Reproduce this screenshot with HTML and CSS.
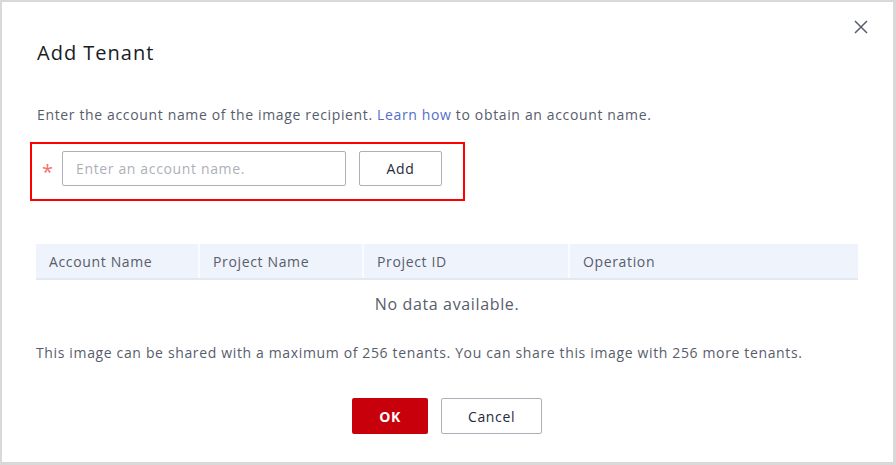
FILE: index.html
```html
<!DOCTYPE html>
<html lang="en">
<head>
<meta charset="utf-8">
<title>Add Tenant</title>
<link rel="stylesheet" href="styles.css">
</head>
<body>
<div class="dialog">
  <div class="dialog-head">
    <h1 class="title">Add Tenant</h1>
    <button class="close" aria-label="Close">
      <svg width="14" height="14" viewBox="0 0 14 14"><path d="M1 1L13 13M13 1L1 13" stroke="#575d6c" stroke-width="1.5" fill="none"/></svg>
    </button>
  </div>
  <p class="desc">Enter the account name of the image recipient. <a class="link" href="#">Learn how</a> to obtain an account name.</p>
  <div class="form-row">
    <span class="req">*</span>
    <input class="input" type="text" placeholder="Enter an account name.">
    <button class="btn btn-add">Add</button>
  </div>
  <div class="table">
    <div class="thead">
      <div class="th c1">Account Name</div>
      <div class="th c2">Project Name</div>
      <div class="th c3">Project ID</div>
      <div class="th c4">Operation</div>
    </div>
    <div class="empty">No data available.</div>
  </div>
  <p class="note">This image can be shared with a maximum of 256 tenants. You can share this image with 256 more tenants.</p>
  <div class="footer">
    <button class="btn btn-ok">OK</button>
    <button class="btn btn-cancel">Cancel</button>
  </div>
</div>
</body>
</html>
```
FILE: styles.css
```css
* { box-sizing: border-box; }
html, body { margin: 0; padding: 0; background: #fff; }
body {
  font-family: "Open Sans", "Noto Sans", sans-serif;
  color: #575d6c;
  font-size: 14px;
  letter-spacing: 0.046em;
}
.dialog {
  width: 896px;
  height: 465px;
  border-style: solid;
  border-color: #d9d9d9;
  border-width: 2px 3px 3px 2px;
  padding: 0 35px 0 34px;
  background: #fff;
}
.dialog-head {
  display: flex;
  justify-content: space-between;
  align-items: flex-start;
  height: 102px;
}
.title {
  margin: 38px 0 0 1px;
  font-size: 20px;
  line-height: 26px;
  font-weight: 500;
  color: #191c24;
  letter-spacing: 0.05em;
}
.close {
  margin: 17px -11px 0 0;
  width: 16px;
  height: 16px;
  padding: 0;
  border: 0;
  background: none;
  display: flex;
  align-items: center;
  justify-content: center;
}
.desc {
  margin: 0 0 0 1px;
  line-height: 22px;
  color: #575d6c;
}
.link { color: #526ecc; text-decoration: none; }
.form-row {
  display: flex;
  align-items: flex-start;
  margin: 16px 0 0 -6px;
  width: 435px;
  height: 59px;
  border: 2px solid #ff0000;
  padding: 7px 0 0 10px;
}
.req {
  color: #f66f6a;
  font-size: 20px;
  width: 20px;
  line-height: 20px;
  padding-top: 11px;
}
.input {
  width: 284px;
  height: 35px;
  border: 1px solid #adb0b8;
  border-radius: 2px;
  padding: 0 13px;
  font-family: inherit;
  font-size: 14px;
  letter-spacing: inherit;
  color: #252b3a;
  outline: none;
}
.input::placeholder { color: #adb0b8; }
.btn {
  height: 36px;
  font-family: inherit;
  font-size: 14px;
  letter-spacing: inherit;
  border-radius: 2px;
  cursor: pointer;
}
.btn-add {
  margin-left: 13px;
  width: 83px;
  height: 35px;
  background: #fff;
  border: 1px solid #adb0b8;
  color: #252b3a;
}
.table {
  margin-top: 43px;
  width: 822px;
}
.thead {
  display: flex;
  background: #eff3fb;
  border-bottom: 2px solid #e3e8f2;
  height: 36px;
}
.th {
  display: flex;
  align-items: center;
  padding-left: 13px;
  color: #575d6c;
  border-right: 2px solid #fafbfe;
}
.c1 { width: 164px; }
.c2 { width: 164px; }
.c3 { width: 206px; }
.c4 { width: 288px; border-right: 0; }
.empty {
  text-align: center;
  font-size: 16px;
  line-height: 24px;
  padding-top: 12px;
  color: #575d6c;
}
.note {
  margin: 26px 0 0 0;
  line-height: 22px;
}
.footer {
  display: flex;
  justify-content: center;
  gap: 13px;
  margin-top: 34px;
}
.btn-ok {
  width: 76px;
  background: #c7000b;
  color: #fff;
  border: 0;
  font-weight: 700;
}
.btn-cancel {
  width: 101px;
  background: #fff;
  border: 1px solid #adb0b8;
  color: #252b3a;
}
```
